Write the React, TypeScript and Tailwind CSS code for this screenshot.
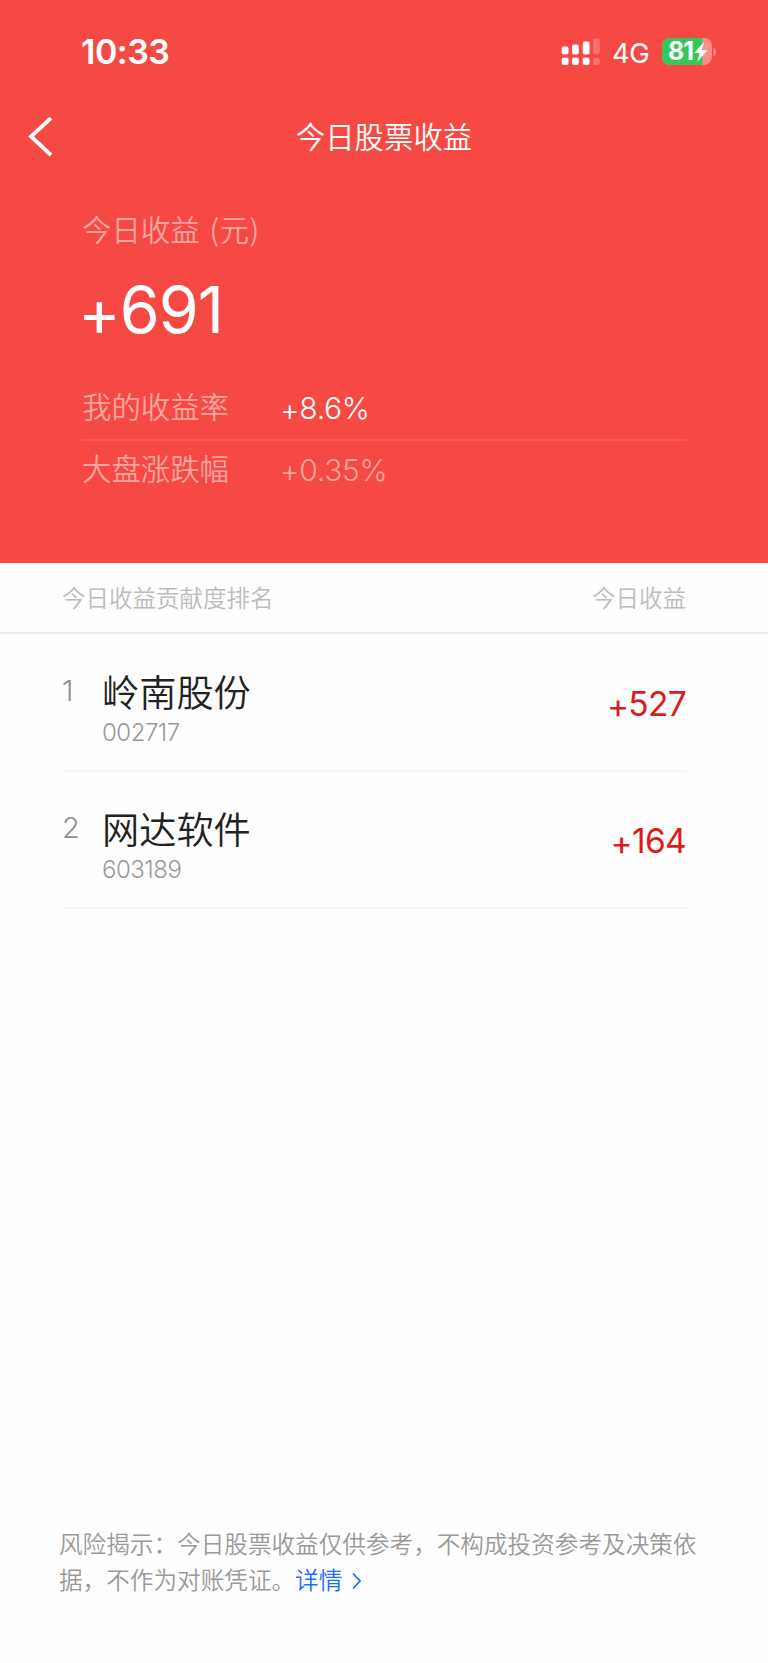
type Stock = {
  rank: number;
  name: string;
  code: string;
  profit: string;
};

const stocks: Stock[] = [
  { rank: 1, name: "岭南股份", code: "002717", profit: "527" },
  { rank: 2, name: "网达软件", code: "603189", profit: "164" },
];

function StatusIcons() {
  return (
    <div className="flex items-center h-7">
      {/* dual sim signal */}
      <svg width="40" height="28" viewBox="0 0 40 28" fill="white">
        <rect x="0.7" y="8.5" width="6.8" height="8" rx="2" />
        <rect x="11" y="6.5" width="6.8" height="10" rx="2" />
        <rect x="21.7" y="3.5" width="6.8" height="13" rx="2" />
        <rect x="32" y="0.5" width="6.8" height="16" rx="2" opacity="0.22" />
        <rect x="0.7" y="19.5" width="6.8" height="7.5" rx="2" />
        <rect x="11" y="19.5" width="6.8" height="7.5" rx="2" />
        <rect x="21.7" y="19.5" width="6.8" height="7.5" rx="2" />
        <rect x="32" y="19.5" width="6.8" height="7.5" rx="2" opacity="0.22" />
      </svg>
      <span className="ml-[11px] mt-[2px] w-[38px] text-[27.5px] leading-7 tracking-[-0.6px] whitespace-nowrap">4G</span>
      {/* battery */}
      <div className="relative ml-[12px] w-[55px] h-7">
        <svg width="55" height="28" viewBox="0 0 55 28">
          <clipPath id="battery">
            <rect x="0" y="0" width="50" height="27" rx="8" />
          </clipPath>
          <g clipPath="url(#battery)">
            <rect width="50" height="28" fill="#fb8e8a" />
            <rect width="40.5" height="28" fill="#34c759" />
          </g>
          <path d="M51.5 9.5 C55 11 55 17 51.5 18.5 Z" fill="#fb8e8a" />
          <path
            d="M42 4 L32.3 15 H37.6 L35.2 24 L45.5 12.2 H39.9 Z"
            fill="white"
          />
        </svg>
        <span className="absolute left-[6px] top-0 text-[25px] leading-[27px] font-bold tracking-[-1px]">81</span>
      </div>
    </div>
  );
}

function Plus() {
  return <span className="relative top-[0.05em]">+</span>;
}

export default function App() {
  return (
    <div className="flex flex-col w-full h-[1663px] bg-[#fefefe] font-['Inter','Noto_Sans_CJK_SC',sans-serif]">
      {/* red header */}
      <header className="h-[563px] shrink-0 bg-[#f64944] text-white">
        {/* status bar */}
        <div className="flex justify-between items-center h-[104px] pl-[81px] pr-[51px]">
          <span className="text-[34px] leading-10 font-[570] tracking-[-0.5px]">10:33</span>
          <StatusIcons />
        </div>

        {/* nav bar */}
        <div className="grid grid-cols-3 items-center h-[66px]">
          <svg className="ml-7" width="26" height="40" viewBox="0 0 26 40" fill="none">
            <path d="M23 1 L3 19.5 L23 38" stroke="white" strokeWidth="3.8" />
          </svg>
          <h1 className="pt-[2px] text-center text-[29.4px] leading-10 font-[350]">今日股票收益</h1>
        </div>

        {/* summary */}
        <div className="px-[82px] text-[29.4px]">
          <p className="pt-[38px] leading-10 font-[350] text-[#fda5a2]">
            今日收益<span className="ml-[10px] font-['Noto_Sans_CJK_SC'] tracking-[0.4px]">(元)</span>
          </p>
          <p className="mt-[19px] -ml-[4px] text-[64.5px] leading-20 font-[370] tracking-[-1px]"><Plus />691</p>
          <div className="mt-[34px] flex items-center h-[55px] pb-[6px] font-[350]">
            <span className="w-[198px] text-[#fda5a2]">我的收益率</span>
            <span className="text-[30px] tracking-[-0.3px]"><Plus />8.6%</span>
          </div>
          <div className="flex items-center h-[62px] pb-[2px] border-t-2 border-[#f85a55] font-[350] text-[#fda5a2]">
            <span className="w-[198px]">大盘涨跌幅</span>
            <span className="text-[30px] font-light tracking-[-0.3px]"><Plus />0.35%</span>
          </div>
        </div>
      </header>

      {/* table header */}
      <div className="flex justify-between items-center h-[71px] shrink-0 pt-[2px] pl-[62px] pr-[82px] border-b-2 border-[#ebebeb] text-[23.5px] font-[350] text-[#bcbcbc]">
        <span>今日收益贡献度排名</span>
        <span>今日收益</span>
      </div>

      {/* stock list */}
      <ul className="pt-px pl-[62px] pr-[82px]">
        {stocks.map((stock) => (
          <li
            key={stock.code}
            className="flex items-center h-[137px] border-b-2 border-[#f7f7f7]"
          >
            <span className="w-[40px] mb-[24px] text-[29px] font-light text-[#8f8f8f]">{stock.rank}</span>
            <div className="pt-[14px]">
              <p className="text-[37.2px] leading-[48px] font-[350] text-[#222]">{stock.name}</p>
              <p className="-mt-[2px] text-[24px] leading-[34px] font-[350] tracking-[-0.5px] text-[#999]">{stock.code}</p>
            </div>
            <span className="ml-auto pt-[3px] text-[33.5px] font-[370] tracking-[-0.7px] text-[#e01a1a]"><Plus />{stock.profit}</span>
          </li>
        ))}
      </ul>

      {/* risk notice */}
      <footer className="mt-auto pl-[59px] pr-[68px] pb-[65px] text-[23.62px] leading-[35.5px] font-[350] text-[#999]">
        <p className="whitespace-nowrap">风险揭示：今日股票收益仅供参考，不构成投资参考及决策依</p>
        <p className="flex items-center">
          据，不作为对账凭证。
          <a className="flex items-center font-[350] text-[#1a6eff]">
            详情
            <svg className="ml-[9px] mt-px" width="12" height="18" viewBox="0 0 12 18" fill="none">
              <path d="M2 1.5 L9 9 L2 16.5" stroke="#1a6eff" strokeWidth="1.8" />
            </svg>
          </a>
        </p>
      </footer>
    </div>
  );
}
